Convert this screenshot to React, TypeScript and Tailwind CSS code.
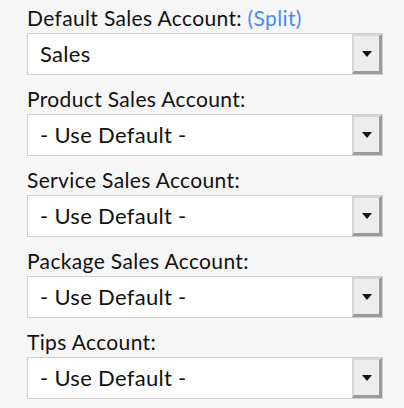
const rows = [
  { label: "Default Sales Account:", value: "Sales", split: true },
  { label: "Product Sales Account:", value: "- Use Default -" },
  { label: "Service Sales Account:", value: "- Use Default -" },
  { label: "Package Sales Account:", value: "- Use Default -" },
  { label: "Tips Account:", value: "- Use Default -" },
];

function SelectBox({ value }: { value: string }) {
  return (
    <div className="flex h-[42px] border border-[#cfcfcf] bg-white">
      <div className="flex flex-1 items-center pl-[12px] text-[22px] leading-[26px] tracking-[0.3px] text-[#111]">
        {value}
      </div>
      <div className="flex w-[30px] items-center justify-center border-l-2 border-t-2 border-r-[3px] border-b-[3px] border-l-[#d6d6d6] border-t-[#d6d6d6] border-r-[#9a9a9a] border-b-[#9a9a9a] bg-[#ececec]">
        <svg width="10" height="6" viewBox="0 0 10 6">
          <polygon points="0,0 10,0 5,6" fill="#111" />
        </svg>
      </div>
    </div>
  );
}

export default function App() {
  return (
    <div
      className="h-[408px] w-[404px] bg-[#f6f6f6] pl-[27px] pr-[21px] pt-[6px]"
      style={{ fontFamily: "Lato, 'Open Sans', sans-serif" }}
    >
      {rows.map((row) => (
        <div key={row.label} className="mb-[12px]">
          <div className="mb-[3px] text-[21px] leading-[24px] tracking-[0.35px] text-[#111]">
            {row.label}
            {row.split && <span className="text-[#4a8af4]"> (Split)</span>}
          </div>
          <SelectBox value={row.value} />
        </div>
      ))}
    </div>
  );
}
